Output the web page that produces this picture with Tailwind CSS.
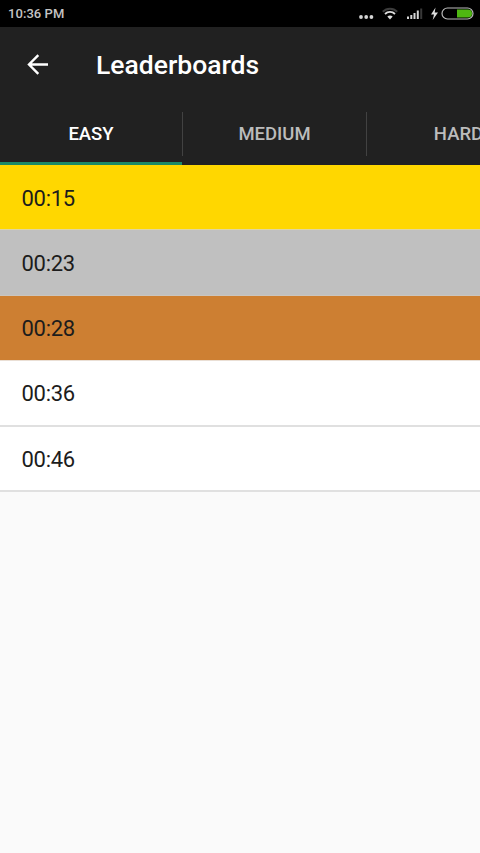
<!DOCTYPE html>
<html lang="en">
<head>
<meta charset="utf-8">
<title>Leaderboards</title>
<script src="https://cdn.jsdelivr.net/npm/@tailwindcss/browser@4"></script>
</head>
<body class="h-[853px] w-[480px] overflow-hidden bg-[#fafafa] font-['Roboto',sans-serif]">
<div class="flex h-[27px] items-center justify-between bg-black pl-2 pr-[5px]">
  <span class="text-[13px] font-medium leading-[27px] tracking-[0.06px] text-[#c4c4c4]">10:36 PM</span>
  <svg class="h-[27px] w-[117px]" viewBox="358 0 117 27" fill="none">
    <g fill="#d5d5d5"><circle cx="361" cy="17" r="1.9"/><circle cx="366.2" cy="17" r="1.9"/><circle cx="371.4" cy="17" r="1.9"/></g>
    <path d="M382.8 11.7a10 10 0 0 1 14.4 0" stroke="#3c3c3c" stroke-width="2"/>
    <path d="M385 14a7 7 0 0 1 10 0" stroke="#ddd" stroke-width="1.8"/>
    <path d="M387.3 16.6a4.3 4.3 0 0 1 5.4 0L390 19.4z" fill="#ddd"/>
    <g fill="#d5d5d5"><path d="M407 16.5h2V19h-2zM410.3 15h2v4h-2zM413.5 13h2v6h-2zM416.8 10.5h2V19h-2z"/><path fill="#383838" d="M420.2 8.5h2V19h-2z"/></g>
    <path d="M435.5 7.5L431 14.5h3L432.7 20l5.3-7.5h-3.3z" fill="#ddd"/>
    <rect x="442" y="8" width="31" height="11" rx="5.5" stroke="#bbb" stroke-width="1.2"/>
    <path d="M457 9.5h11a4 4 0 0 1 0 8h-11z" fill="#4fb812"/>
  </svg>
</div>
<header class="flex h-[76px] items-center bg-[#212121] pl-[27px]">
  <svg class="mb-px h-[22px] w-[22px]" viewBox="0 0 22 22" fill="none" stroke="#fff" stroke-width="2.4"><path d="M21 10.5H2M11.3 1.2L2 10.5l9.3 9.3"/></svg>
  <h1 class="ml-[47px] text-[26.5px] font-medium leading-[30px] text-white">Leaderboards</h1>
</header>
<nav class="flex h-[62px] overflow-hidden bg-[#212121] text-[18.5px] font-medium text-[#bcbcbc]">
  <div class="flex w-[182px] shrink-0 items-center justify-center border-b-[3px] border-[#1b8a68] pt-[5px] text-white">EASY</div>
  <div class="mt-[9px] h-[44px] w-px shrink-0 bg-[#424242]"></div>
  <div class="flex w-[183px] shrink-0 items-center justify-center pt-[2px]">MEDIUM</div>
  <div class="mt-[9px] h-[44px] w-px shrink-0 bg-[#424242]"></div>
  <div class="flex w-[183px] shrink-0 items-center justify-center pt-[2px]">HARD</div>
</nav>
<main class="text-[22px] leading-[26px] tracking-[-0.3px] text-[#1c1c1c]">
  <div class="flex h-[65.4px] items-center border-b border-[#dfd5a0] bg-[#ffd700] pl-[21.5px] pt-[3px]">00:15</div>
  <div class="flex h-[65.4px] items-center border-b border-[#cbc5be] bg-[#c0c0c0] pl-[21.5px] pt-[3px]">00:23</div>
  <div class="flex h-[65.2px] items-center border-b border-[#eadfd5] bg-[#cd7f32] pl-[21.5px] pt-[3px]">00:28</div>
  <div class="flex h-[66px] items-center border-b-2 border-[#e0e0e0] bg-white pl-[21.5px] pt-[3px]">00:36</div>
  <div class="flex h-[65px] items-center border-b-2 border-[#e0e0e0] bg-white pl-[21.5px] pt-[3px]">00:46</div>
</main>
</body>
</html>
